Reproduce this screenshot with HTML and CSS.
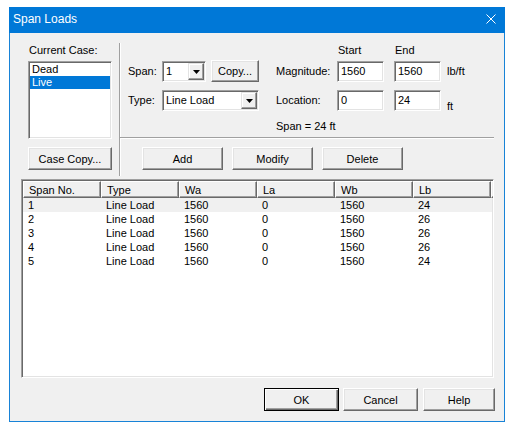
FILE: index.html
```html
<!DOCTYPE html>
<html lang="en">

<head>
    <meta charset="UTF-8">
    <title>Span Loads</title>
    <link rel="stylesheet" href="styles.css">
</head>

<body>
    <div class="window">
        <div class="titlebar">
            <span class="title">Span Loads</span>
            <svg class="close" width="10" height="10" viewBox="0 0 10 10">
                <path d="M0.5 0.5L9.5 9.5M9.5 0.5L0.5 9.5" stroke="#fff" stroke-width="1" fill="none" />
            </svg>
        </div>

        <div class="client">
            <div class="top">
                <!-- 荷载工况 -->
                <div class="case-col">
                    <div class="case-label">Current Case:</div>
                    <ul class="listbox">
                        <li>Dead</li>
                        <li class="selected">Live</li>
                    </ul>
                    <button class="btn case-copy">Case Copy...</button>
                </div>

                <div class="vsep"></div>

                <div class="edit-area">
                    <div class="fields">
                        <span class="head col-start">Start</span>
                        <span class="head col-end">End</span>

                        <span class="lbl row-start">Span:</span>
                        <div class="combo span-combo">
                            <span class="combo-text">1</span>
                            <span class="drop">
                                <svg width="7" height="4" viewBox="0 0 7 4"><path d="M0 0H7L3.5 4Z" fill="#000" /></svg>
                            </span>
                        </div>
                        <button class="btn copy">Copy...</button>
                        <span class="lbl">Magnitude:</span>
                        <span class="field">1560</span>
                        <span class="field">1560</span>
                        <span class="lbl">lb/ft</span>

                        <span class="lbl row-start">Type:</span>
                        <div class="combo type-combo">
                            <span class="combo-text">Line Load</span>
                            <span class="drop">
                                <svg width="7" height="4" viewBox="0 0 7 4"><path d="M0 0H7L3.5 4Z" fill="#000" /></svg>
                            </span>
                        </div>
                        <span class="lbl">Location:</span>
                        <span class="field">0</span>
                        <span class="field">24</span>
                        <span class="lbl unit-low">ft</span>

                        <span class="span-info">Span = 24 ft</span>
                    </div>

                    <div class="hsep"></div>

                    <div class="edit-buttons">
                        <button class="btn wide">Add</button>
                        <button class="btn wide">Modify</button>
                        <button class="btn wide">Delete</button>
                    </div>
                </div>
            </div>

            <!-- 荷载列表 -->
            <div class="listview">
                <div class="lv-head">
                    <span class="lv-h">Span No.</span>
                    <span class="lv-h">Type</span>
                    <span class="lv-h">Wa</span>
                    <span class="lv-h">La</span>
                    <span class="lv-h">Wb</span>
                    <span class="lv-h">Lb</span>
                    <span class="lv-h"></span>
                </div>
                <div class="lv-row current">
                    <span>1</span><span>Line Load</span><span>1560</span><span>0</span><span>1560</span><span>24</span>
                </div>
                <div class="lv-row">
                    <span>2</span><span>Line Load</span><span>1560</span><span>0</span><span>1560</span><span>26</span>
                </div>
                <div class="lv-row">
                    <span>3</span><span>Line Load</span><span>1560</span><span>0</span><span>1560</span><span>26</span>
                </div>
                <div class="lv-row">
                    <span>4</span><span>Line Load</span><span>1560</span><span>0</span><span>1560</span><span>26</span>
                </div>
                <div class="lv-row">
                    <span>5</span><span>Line Load</span><span>1560</span><span>0</span><span>1560</span><span>24</span>
                </div>
            </div>

            <div class="dialog-buttons">
                <button class="btn default ok">OK</button>
                <button class="btn cancel">Cancel</button>
                <button class="btn help">Help</button>
            </div>
        </div>
    </div>
</body>

</html>
```

FILE: styles.css
```css
body {
    margin: 0;
    background: #fff;
    font-family: "Liberation Sans", Arial, sans-serif;
    font-size: 11px;
    color: #000;
}

.window {
    box-sizing: border-box;
    width: 496px;
    height: 415px;
    margin: 7px 0 0 9px;
    border: 1px solid #1883d7;
    border-top: none;
    background: #f0f0f0;
}

.titlebar {
    height: 26px;
    margin: 0 -1px;
    padding: 0 9px 2px 4px;
    box-sizing: border-box;
    display: flex;
    align-items: center;
    justify-content: space-between;
    background: #0078d7;
    color: #fff;
}

.title {
    font-size: 12px;
}

.client {
    height: 388px;
    box-sizing: border-box;
    padding: 10px 10px 0 11px;
}

.top {
    display: flex;
    height: 133px;
}

/* 左侧工况 */
.case-col {
    width: 84px;
    margin-left: 7px;
    display: flex;
    flex-direction: column;
}

.case-label {
    margin-top: 1px;
    line-height: 13px;
    padding-left: 1px;
}

.listbox {
    box-sizing: border-box;
    height: 78px;
    margin: 4px 0 0;
    padding: 0;
    list-style: none;
    background: #fff;
    border: 1px solid;
    border-color: #a0a0a0 #fff #fff #a0a0a0;
    box-shadow: inset 1px 1px #696969, inset -1px -1px #e3e3e3;
    padding: 1px;
}

.listbox li {
    line-height: 13px;
    padding-left: 2px;
}

.listbox .selected {
    background: #0078d7;
    color: #fff;
}

.btn {
    box-sizing: border-box;
    height: 23px;
    padding: 0;
    font-family: inherit;
    font-size: 11px;
    color: #000;
    background: #f0f0f0;
    border: 1px solid;
    border-color: #fff #696969 #696969 #fff;
    box-shadow: inset -1px -1px #a0a0a0, inset 1px 1px #e3e3e3;
}

.case-copy {
    margin-top: 8px;
    width: 84px;
}

.vsep {
    width: 2px;
    margin-left: 7px;
    box-sizing: border-box;
    border-left: 1px solid #a0a0a0;
    border-right: 1px solid #fff;
}

/* 右侧编辑区 */
.edit-area {
    flex: 1;
    padding-top: 1px;
    display: flex;
    flex-direction: column;
}

.fields {
    display: grid;
    padding-left: 7px;
    grid-template-columns: 34px 49px 65px 61px 57px 53px auto;
    grid-template-rows: 16px 29px 29px 16px;
}

.head {
    line-height: 13px;
    padding-left: 1px;
}

.col-start {
    grid-column: 5;
}

.col-end {
    grid-column: 6;
}

.row-start {
    grid-column: 1;
}

.lbl {
    height: 22px;
    display: flex;
    align-items: center;
    white-space: nowrap;
}

.unit-low {
    padding-top: 6px;
}

.field,
.combo {
    box-sizing: border-box;
    height: 21px;
    margin-top: 1px;
    background: #fff;
    border: 1px solid;
    border-color: #a0a0a0 #fff #fff #a0a0a0;
    box-shadow: inset 1px 1px #696969, inset -1px -1px #e3e3e3;
}

.field {
    width: 47px;
    padding: 1px 0 0 3px;
    line-height: 17px;
}

.combo {
    display: flex;
    padding: 1px;
}

.span-combo {
    width: 44px;
}

.type-combo {
    grid-column: 2 / span 2;
    width: 97px;
}

.combo-text {
    flex: 1;
    padding-left: 2px;
    line-height: 17px;
}

.drop {
    box-sizing: border-box;
    width: 16px;
    height: 17px;
    display: flex;
    align-items: center;
    justify-content: center;
    background: #f0f0f0;
    border: 1px solid;
    border-color: #e3e3e3 #696969 #696969 #e3e3e3;
    box-shadow: inset -1px -1px #a0a0a0, inset 1px 1px #fff;
}

.copy {
    width: 48px;
    height: 22px;
}

.span-info {
    grid-column: 4 / span 4;
    line-height: 16px;
}

.hsep {
    height: 2px;
    margin: 3px 0 0 -1px;
    box-sizing: border-box;
    border-top: 1px solid #a0a0a0;
    border-bottom: 1px solid #fff;
}

.edit-buttons {
    display: flex;
    gap: 9px;
    margin: 8px 0 0 21px;
}

.wide {
    width: 81px;
}

/* 列表 */
.listview {
    box-sizing: border-box;
    width: 473px;
    height: 199px;
    margin-top: 3px;
    background: #fff;
    border: 1px solid;
    border-color: #a0a0a0 #fff #fff #a0a0a0;
    box-shadow: inset 1px 1px #696969, inset -1px -1px #e3e3e3;
    padding: 1px;
    overflow: hidden;
}

.lv-head,
.lv-row {
    display: grid;
    grid-template-columns: repeat(6, 78px) 1fr;
}

.lv-h {
    box-sizing: border-box;
    height: 17px;
    padding: 1px 0 0 5px;
    line-height: 15px;
    background: #f0f0f0;
    border: 1px solid;
    border-color: #fff #696969 #696969 #fff;
    box-shadow: inset -1px -1px #a0a0a0;
    white-space: nowrap;
}

.lv-row {
    height: 14px;
    line-height: 14px;
}

.lv-row span {
    padding-left: 5px;
}

.lv-row.current {
    background: #f0f0f0;
}

.dialog-buttons {
    display: flex;
    justify-content: flex-end;
    margin: 10px -1px 0 0;
}

.ok,
.cancel {
    width: 75px;
}

.cancel {
    margin-left: 4px;
}

.help {
    width: 72px;
    margin-left: 5px;
}

.btn.default {
    border: 1px solid #000;
    box-shadow: inset 1px 1px #fff, inset -1px -1px #696969, inset -2px -2px #a0a0a0;
}
```
